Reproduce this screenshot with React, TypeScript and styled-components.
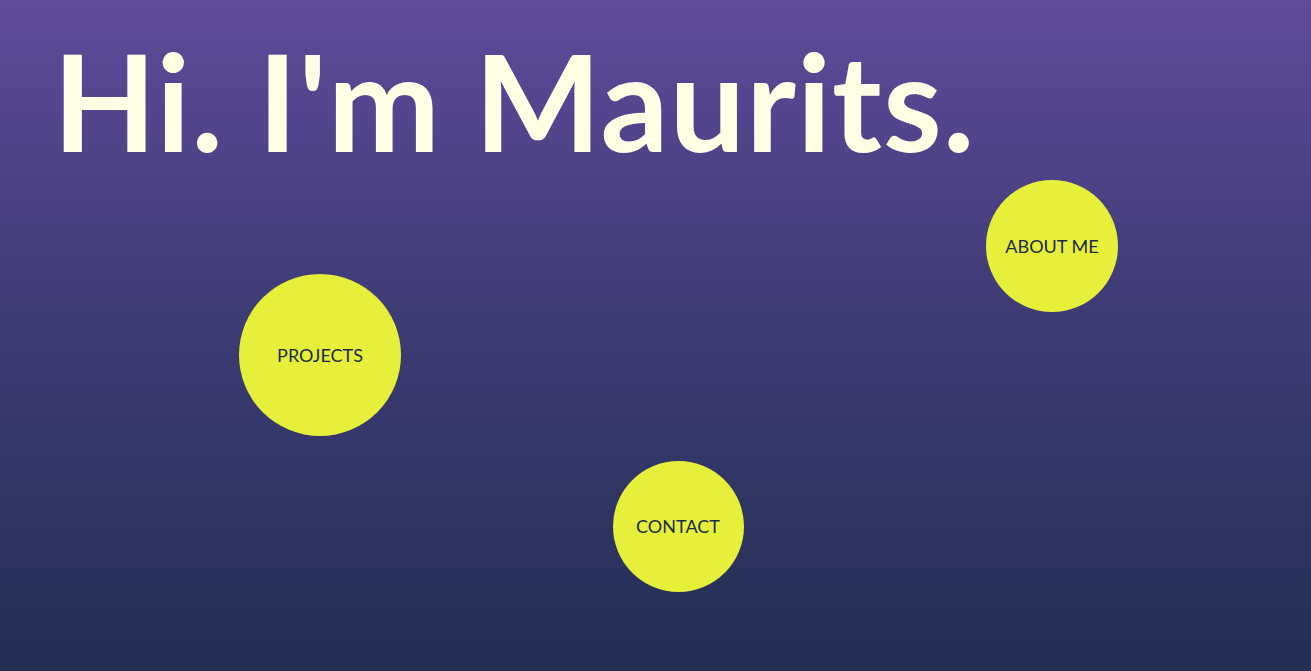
import React from "react";
import styled, { createGlobalStyle } from "styled-components";

const Global = createGlobalStyle`
  html, body { margin: 0; padding: 0; height: 100%; }
  body { font-family: "Lato", "DejaVu Sans", sans-serif; }
`;

const Page = styled.main`
  position: relative;
  width: 100%;
  height: 671px;
  overflow: hidden;
  background: linear-gradient(to bottom, #5f4a9b 0%, #3f3c76 45%, #222f53 100%);
`;

const Title = styled.h1`
  margin: 0;
  padding: 26px 0 0 53px;
  font-family: "Lato", sans-serif;
  font-weight: 700;
  font-size: 134px;
  line-height: 150px;
  color: #fffee4;
  letter-spacing: 1px;
`;

const Bubble = styled.a<{ $x: number; $y: number; $d: number }>`
  position: absolute;
  left: ${(p) => p.$x - p.$d / 2}px;
  top: ${(p) => p.$y - p.$d / 2}px;
  width: ${(p) => p.$d}px;
  height: ${(p) => p.$d}px;
  border-radius: 50%;
  background: #e6f03a;
  display: flex;
  align-items: center;
  justify-content: center;
  color: #1b2a48;
  font-family: "Lato", sans-serif;
  font-size: 18px;
  text-decoration: none;
`;

export default function App() {
  return (
    <>
      <Global />
      <Page>
        <Title>Hi. I'm Maurits.</Title>
        <Bubble href="#" $x={1052} $y={246} $d={132}>ABOUT ME</Bubble>
        <Bubble href="#" $x={320} $y={355} $d={162}>PROJECTS</Bubble>
        <Bubble href="#" $x={678} $y={526} $d={131}>CONTACT</Bubble>
      </Page>
    </>
  );
}
